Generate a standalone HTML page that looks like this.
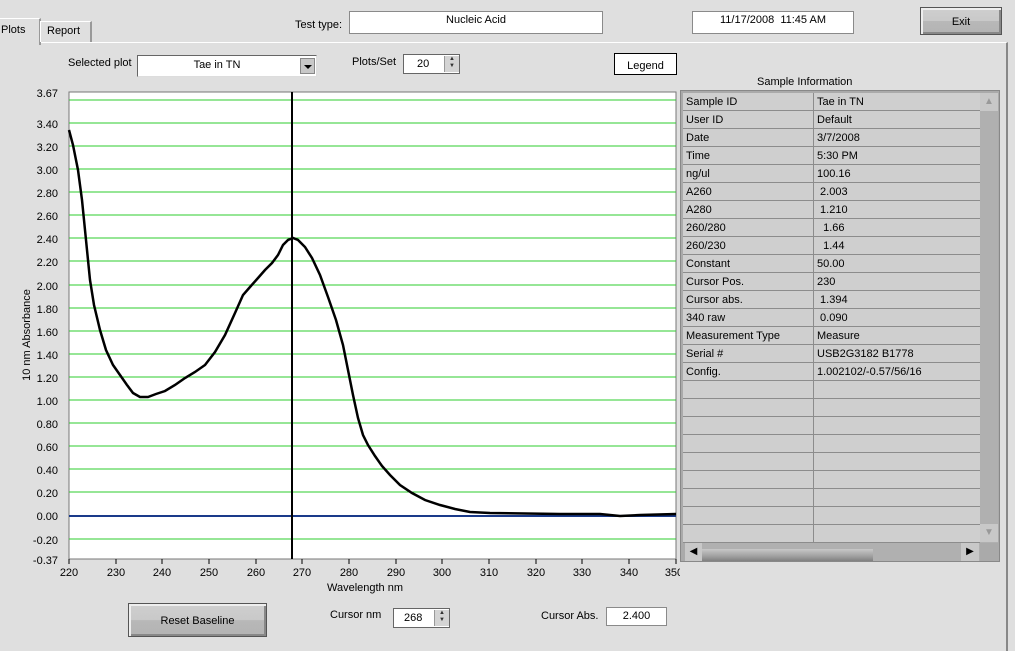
<!DOCTYPE html>
<html><head><style>
body{margin:0;width:1015px;height:650px;background:#dfdfdf;font-family:"Liberation Sans",sans-serif;font-size:11px;color:#000;position:relative;overflow:hidden}
.a{position:absolute}
.box{position:absolute;background:#fff;border:1px solid #8a8a8a;text-align:center;box-sizing:border-box}
.btn{position:absolute;background:linear-gradient(#cfcfcf 0,#c9c9c9 50%,#b8b8b8 51%,#b3b3b3 100%);border:1px solid #555;box-shadow:inset 2px 2px 0 #eee,inset -2px -2px 0 #888;text-align:center;box-sizing:border-box}
table{border-collapse:collapse;width:297px;table-layout:fixed}
td{height:17px;border-bottom:1px solid #8c8c8c;padding:0 0 0 3px;font-size:11px;white-space:nowrap;overflow:hidden}
td.l{width:127px;border-right:1px solid #8c8c8c}
.spin{position:absolute;width:14px;border-left:1px solid #999;background:#d4d4d4;font-size:6px;line-height:7px;text-align:center;color:#333}
</style></head><body>
<div class="a" style="left:0;top:42px;width:1006px;height:608px;border-top:1px solid #fff;border-right:2px solid #888"></div>
<div class="a" style="left:-2px;top:18px;width:40px;height:26px;background:#dfdfdf;border:1px solid #fff;border-bottom:none;border-right:2px solid #999"></div>
<div class="a" style="left:1px;top:24px;">Plots</div>
<div class="a" style="left:40px;top:21px;width:49px;height:20px;border:1px solid #fff;border-bottom:none;border-right:2px solid #999"></div>
<div class="a" style="left:47px;top:25px;">Report</div>
<div class="a" style="left:295px;top:19px">Test type:</div>
<div class="box" style="left:349px;top:11px;width:254px;height:23px;padding-top:2px">Nucleic Acid</div>
<div class="box" style="left:692px;top:11px;width:162px;height:23px;padding-top:2px">11/17/2008&nbsp; 11:45 AM</div>
<div class="btn" style="left:920px;top:7px;width:82px;height:28px;padding-top:8px">Exit</div>
<div class="a" style="left:68px;top:57px">Selected plot</div>
<div class="box" style="left:137px;top:55px;width:180px;height:22px;padding:3px 20px 0 0;border:1px solid #666;border-right-color:#ddd;border-bottom-color:#ddd">Tae in TN</div>
<div class="a" style="left:300px;top:58px;width:15px;height:16px;background:#c8c8c8;border:1px solid #888;box-sizing:border-box"><div class="a" style="left:3px;top:6px;border:4px solid transparent;border-top:4px solid #000;border-bottom:0"></div></div>
<div class="a" style="left:352px;top:56px">Plots/Set</div>
<div class="box" style="left:403px;top:54px;width:57px;height:20px;text-align:left;padding:3px 0 0 13px;border:1px solid #666">20</div>
<div class="spin" style="left:444px;top:56px;height:16px">▲<br>▼</div>
<div class="box" style="left:614px;top:53px;width:63px;height:22px;border:1px solid #000;padding-top:6px">Legend</div>
<svg class="a" style="left:0;top:80px" width="680" height="520" viewBox="0 80 680 520">
<rect x="69" y="92" width="607" height="467" fill="#fff" stroke="#777"/>
<g stroke="#2ecc2e" stroke-width="1" shape-rendering="crispEdges">
<path d="M69 100H676M69 123H676M69 146H676M69 169H676M69 192H676M69 215H676M69 238H676M69 261H676M69 285H676M69 308H676M69 331H676M69 354H676M69 377H676M69 400H676M69 423H676M69 446H676M69 469H676M69 492H676M69 539H676"/>
</g>
<path d="M69 516H676" stroke="#1a3a8a" stroke-width="2"/>
<path d="M292 92V559" stroke="#000" stroke-width="2"/>
<polyline fill="none" stroke="#000" stroke-width="2.5" points="69,130 73,145 78,170 82,200 86,240 90,280 94,305 100,330 106,350 113,365 120,375 127,385 133,393 140,397 148,397 156,394 165,391 175,385 185,378 195,372 205,365 215,352 225,335 235,313 243,295 250,287 258,278 265,270 272,263 278,255 283,245 288,240 293,238 298,240 305,247 312,258 320,275 328,297 336,320 343,345 348,370 353,395 358,418 363,435 368,445 375,456 382,466 390,475 400,485 412,493 425,500 440,505 455,509 470,512 490,513 560,514 600,514 620,516 640,515 676,514"/>
<g font-family="Liberation Sans" font-size="11" text-anchor="end">
<text x="58" y="97">3.67</text><text x="58" y="128">3.40</text><text x="58" y="151">3.20</text><text x="58" y="174">3.00</text><text x="58" y="197">2.80</text><text x="58" y="220">2.60</text><text x="58" y="243">2.40</text><text x="58" y="266">2.20</text><text x="58" y="290">2.00</text><text x="58" y="313">1.80</text><text x="58" y="336">1.60</text><text x="58" y="359">1.40</text><text x="58" y="382">1.20</text><text x="58" y="405">1.00</text><text x="58" y="428">0.80</text><text x="58" y="451">0.60</text><text x="58" y="474">0.40</text><text x="58" y="497">0.20</text><text x="58" y="520">0.00</text><text x="58" y="544">-0.20</text><text x="58" y="564">-0.37</text>
</g>
<g stroke="#000"><path d="M69 559v5M116 559v5M162 559v5M209 559v5M256 559v5M302 559v5M349 559v5M396 559v5M442 559v5M489 559v5M536 559v5M582 559v5M629 559v5M676 559v5"/></g>
<g font-family="Liberation Sans" font-size="11" text-anchor="middle">
<text x="69" y="576">220</text><text x="116" y="576">230</text><text x="162" y="576">240</text><text x="209" y="576">250</text><text x="256" y="576">260</text><text x="302" y="576">270</text><text x="349" y="576">280</text><text x="396" y="576">290</text><text x="442" y="576">300</text><text x="489" y="576">310</text><text x="536" y="576">320</text><text x="582" y="576">330</text><text x="629" y="576">340</text><text x="674" y="576">350</text>
<text x="365" y="591">Wavelength nm</text>
<text transform="translate(30 335) rotate(-90)">10 nm Absorbance</text>
</g>
</svg>
<div class="btn" style="left:128px;top:603px;width:139px;height:34px;padding-top:11px">Reset Baseline</div>
<div class="a" style="left:330px;top:609px">Cursor nm</div>
<div class="box" style="left:393px;top:608px;width:57px;height:20px;text-align:left;padding:3px 0 0 10px;border:1px solid #666">268</div>
<div class="spin" style="left:434px;top:610px;height:16px">▲<br>▼</div>
<div class="a" style="left:541px;top:610px">Cursor Abs.</div>
<div class="box" style="left:606px;top:607px;width:61px;height:19px;padding-top:2px">2.400</div>
<div class="a" style="left:757px;top:76px">Sample Information</div>
<div class="a" style="left:680px;top:90px;width:320px;height:472px;background:#aaa;border:1px solid #888;box-sizing:border-box"></div>
<div class="a" style="left:683px;top:93px;width:297px;height:450px;background:#cfcfcf;overflow:hidden">
<table>
<tr><td class="l">Sample ID</td><td>Tae in TN</td></tr>
<tr><td class="l">User ID</td><td>Default</td></tr>
<tr><td class="l">Date</td><td>3/7/2008</td></tr>
<tr><td class="l">Time</td><td>5:30 PM</td></tr>
<tr><td class="l">ng/ul</td><td>100.16</td></tr>
<tr><td class="l">A260</td><td>&nbsp;2.003</td></tr>
<tr><td class="l">A280</td><td>&nbsp;1.210</td></tr>
<tr><td class="l">260/280</td><td>&nbsp;&nbsp;1.66</td></tr>
<tr><td class="l">260/230</td><td>&nbsp;&nbsp;1.44</td></tr>
<tr><td class="l">Constant</td><td>50.00</td></tr>
<tr><td class="l">Cursor Pos.</td><td>230</td></tr>
<tr><td class="l">Cursor abs.</td><td>&nbsp;1.394</td></tr>
<tr><td class="l">340 raw</td><td>&nbsp;0.090</td></tr>
<tr><td class="l">Measurement Type</td><td>Measure</td></tr>
<tr><td class="l">Serial #</td><td>USB2G3182 B1778</td></tr>
<tr><td class="l">Config.</td><td>1.002102/-0.57/56/16</td></tr>
<tr><td class="l"></td><td></td></tr><tr><td class="l"></td><td></td></tr><tr><td class="l"></td><td></td></tr><tr><td class="l"></td><td></td></tr><tr><td class="l"></td><td></td></tr><tr><td class="l"></td><td></td></tr><tr><td class="l"></td><td></td></tr><tr><td class="l"></td><td></td></tr><tr><td class="l"></td><td></td></tr>
</table></div>
<div class="a" style="left:980px;top:93px;width:18px;height:450px;background:#b0b0b0"></div>
<div class="a" style="left:980px;top:93px;width:18px;height:18px;background:#c8c8c8;color:#999;text-align:center;font-size:10px;line-height:18px">▲</div>
<div class="a" style="left:980px;top:524px;width:18px;height:18px;background:#c8c8c8;color:#999;text-align:center;font-size:10px;line-height:18px">▼</div>
<div class="a" style="left:685px;top:543px;width:295px;height:18px;background:#b0b0b0"></div>
<div class="a" style="left:685px;top:543px;width:17px;height:18px;background:#c8c8c8;text-align:center;font-size:10px;line-height:18px">◀</div>
<div class="a" style="left:702px;top:549px;width:171px;height:12px;background:linear-gradient(#c8c8c8,#a0a0a0 60%,#808080)"></div>
<div class="a" style="left:961px;top:543px;width:18px;height:18px;background:#c8c8c8;text-align:center;font-size:10px;line-height:18px">▶</div>
</body></html>
